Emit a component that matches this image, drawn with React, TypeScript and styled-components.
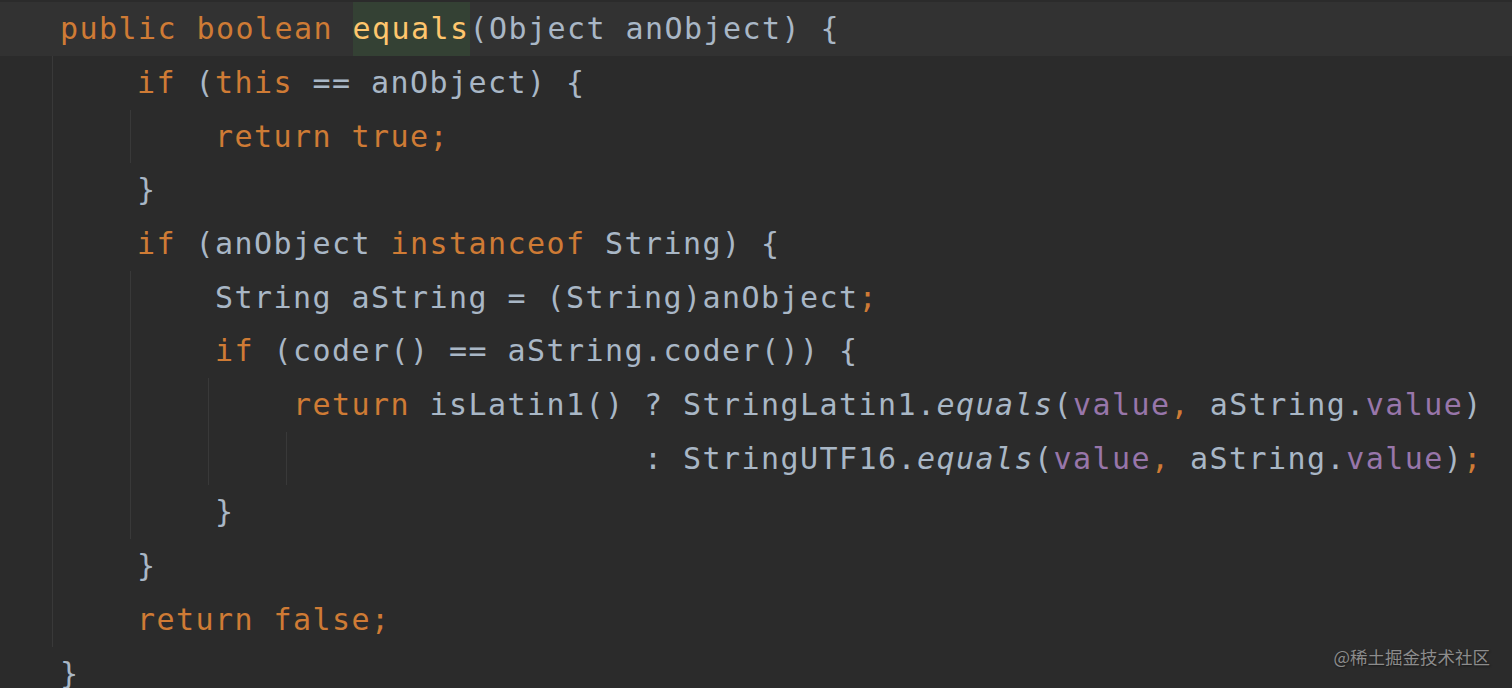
import React from "react";
import styled, { createGlobalStyle, css } from "styled-components";

const GlobalStyle = createGlobalStyle`
  html, body, #root { margin: 0; padding: 0; height: 100%; }
  body { background: #2b2b2b; overflow: hidden; }
`;

const LINE_H = 53.7;

const Editor = styled.div`
  position: relative;
  height: 100vh;
  box-sizing: border-box;
  padding-top: 2.3px;
  background: #2b2b2b;
  font-family: "DejaVu Sans Mono", "Liberation Mono", monospace;
  font-size: 30px;
  letter-spacing: 1.44px;
  color: #a9b7c6;
  overflow: hidden;
`;

const Line = styled.div<{ $current?: boolean }>`
  display: flex;
  height: ${LINE_H}px;
  padding-left: 52px;
  background: ${(p) => (p.$current ? "#323232" : "transparent")};
`;

const Indent = styled.span`
  flex: 0 0 78px;
  box-sizing: border-box;
  border-left: 1px solid #393939;
`;

const Code = styled.span<{ $nested?: boolean }>`
  padding-left: ${(p) => (p.$nested ? "7px" : "8px")};
  white-space: pre;
  line-height: ${LINE_H}px;
`;

type Kind = "kw" | "plain" | "decl" | "field" | "static";

const Tok = styled.span<{ $k: Kind }>`
  ${(p) =>
    p.$k === "kw" &&
    css`
      color: #cf7b35;
    `}
  ${(p) =>
    p.$k === "plain" &&
    css`
      color: #a9b7c6;
    `}
  ${(p) =>
    p.$k === "decl" &&
    css`
      color: #ffc66d;
      background: #344134;
      display: inline-block;
      height: ${LINE_H}px;
    `}
  ${(p) =>
    p.$k === "field" &&
    css`
      color: #9876aa;
    `}
  ${(p) =>
    p.$k === "static" &&
    css`
      color: #a9b7c6;
      font-style: italic;
    `}
`;

const Watermark = styled.div`
  position: absolute;
  right: 22px;
  bottom: 19px;
  font-family: "Noto Sans CJK SC", "Noto Sans", sans-serif;
  font-size: 17.5px;
  letter-spacing: 0;
  color: #8c8c8c;
  text-shadow: 1px 1px 2px rgba(0, 0, 0, 0.45);
`;

type T = [Kind, string];
const lines: { depth: number; current?: boolean; toks: T[] }[] = [
  {
    depth: 0,
    current: true,
    toks: [
      ["kw", "public boolean "],
      ["decl", "equals"],
      ["plain", "(Object anObject) {"],
    ],
  },
  {
    depth: 1,
    toks: [
      ["kw", "if "],
      ["plain", "("],
      ["kw", "this"],
      ["plain", " == anObject) {"],
    ],
  },
  { depth: 2, toks: [["kw", "return true;"]] },
  { depth: 1, toks: [["plain", "}"]] },
  {
    depth: 1,
    toks: [
      ["kw", "if "],
      ["plain", "(anObject "],
      ["kw", "instanceof "],
      ["plain", "String) {"],
    ],
  },
  {
    depth: 2,
    toks: [
      ["plain", "String aString = (String)anObject"],
      ["kw", ";"],
    ],
  },
  {
    depth: 2,
    toks: [
      ["kw", "if "],
      ["plain", "(coder() == aString.coder()) {"],
    ],
  },
  {
    depth: 3,
    toks: [
      ["kw", "return "],
      ["plain", "isLatin1() ? StringLatin1."],
      ["static", "equals"],
      ["plain", "("],
      ["field", "value"],
      ["kw", ", "],
      ["plain", "aString."],
      ["field", "value"],
      ["plain", ")"],
    ],
  },
  {
    depth: 4,
    toks: [
      ["plain", "              : StringUTF16."],
      ["static", "equals"],
      ["plain", "("],
      ["field", "value"],
      ["kw", ", "],
      ["plain", "aString."],
      ["field", "value"],
      ["plain", ")"],
      ["kw", ";"],
    ],
  },
  { depth: 2, toks: [["plain", "}"]] },
  { depth: 1, toks: [["plain", "}"]] },
  { depth: 1, toks: [["kw", "return false;"]] },
  { depth: 0, toks: [["plain", "}"]] },
];

export default function App() {
  return (
    <>
      <GlobalStyle />
      <Editor>
        {lines.map((l, i) => (
          <Line key={i} $current={l.current}>
            {Array.from({ length: l.depth }).map((_, j) => (
              <Indent key={j} />
            ))}
            <Code $nested={l.depth > 0}>
              {l.toks.map(([k, t], j) => (
                <Tok key={j} $k={k}>
                  {t}
                </Tok>
              ))}
            </Code>
          </Line>
        ))}
        <Watermark>@稀土掘金技术社区</Watermark>
      </Editor>
    </>
  );
}
